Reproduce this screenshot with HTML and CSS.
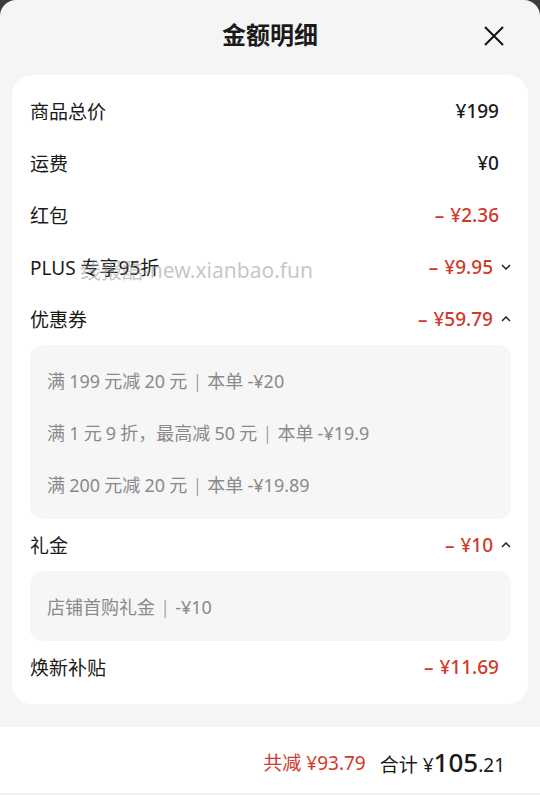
FILE: index.html
```html
<!DOCTYPE html>
<html lang="zh-CN">
  <head>
    <meta charset="utf-8">
    <link rel="stylesheet" href="styles.css">
    <title>金额明细</title>
  </head>
  <body>
    <div class="sheet">
      <div class="header">
        <span></span>
        <h1>金额明细</h1>
        <svg class="close" width="20" height="20" viewBox="0 0 20 20">
          <path d="M1 1 L19 19 M19 1 L1 19" stroke="#111" stroke-width="2" fill="none"/>
        </svg>
      </div>

      <div class="card">
        <div class="row">
          <span class="label">商品总价</span>
          <span class="value">¥199</span>
        </div>
        <div class="row">
          <span class="label">运费</span>
          <span class="value">¥0</span>
        </div>
        <div class="row">
          <span class="label">红包</span>
          <span class="value red"><i>–</i>¥2.36</span>
        </div>
        <div class="row folded">
          <span class="label">PLUS 专享95折</span>
          <span class="value red"><i>–</i>¥9.95</span>
          <svg class="chev" width="10" height="6" viewBox="0 0 10 6">
            <path d="M1 1 L5 5 L9 1" stroke="#222" stroke-width="1.5" fill="none"/>
          </svg>
          <span class="watermark">线报酷-new.xianbao.fun</span>
        </div>
        <div class="row folded">
          <span class="label">优惠券</span>
          <span class="value red"><i>–</i>¥59.79</span>
          <svg class="chev" width="10" height="6" viewBox="0 0 10 6">
            <path d="M1 5 L5 1 L9 5" stroke="#222" stroke-width="1.5" fill="none"/>
          </svg>
        </div>
        <div class="detail">
          <p>满 199 元减 20 元 <i>|</i> 本单 -¥20</p>
          <p>满 1 元 9 折，最高减 50 元 <i>|</i> 本单 -¥19.9</p>
          <p>满 200 元减 20 元 <i>|</i> 本单 -¥19.89</p>
        </div>
        <div class="row folded">
          <span class="label">礼金</span>
          <span class="value red"><i>–</i>¥10</span>
          <svg class="chev" width="10" height="6" viewBox="0 0 10 6">
            <path d="M1 5 L5 1 L9 5" stroke="#222" stroke-width="1.5" fill="none"/>
          </svg>
        </div>
        <div class="detail">
          <p>店铺首购礼金 <i>|</i> -¥10</p>
        </div>
        <div class="row">
          <span class="label">焕新补贴</span>
          <span class="value red"><i>–</i>¥11.69</span>
        </div>
      </div>

      <div class="footer">
        <span class="saved">共减 ¥93.79</span>
        <span class="total">合计 ¥<b>105</b>.21</span>
      </div>
    </div>
  </body>
</html>
```

FILE: styles.css
```css
body{
  margin: 0;
  background-color: #3c3c3c;
  font-family: 'Noto Sans', 'Noto Sans CJK SC', sans-serif;
  color: #1a1a1a;
}
.sheet{
  background-color: #f5f5f5;
  border-radius: 16px 16px 0 0;
  height: 795px;
  display: flex;
  flex-direction: column;
  overflow: hidden;
}
.header{
  height: 75px;
  display: grid;
  grid-template-columns: 1fr auto 1fr;
  align-items: center;
  padding: 0 36px;
}
.header h1{
  margin: 0;
  font-size: 24px;
  font-weight: 700;
  line-height: 1;
  padding-bottom: 5px;
}
.close{
  justify-self: end;
  margin-bottom: 3px;
}
.card{
  background-color: #ffffff;
  margin: 0 12px;
  border-radius: 20px;
  padding: 10px 17px 11px 18px;
}
.row{
  position: relative;
  height: 52px;
  display: flex;
  align-items: center;
  padding-right: 12px;
}
.row.folded{
  padding-right: 0;
}
.label{
  flex: 1;
  font-size: 19px;
}
.value{
  font-size: 19px;
  font-weight: 500;
}
.value i{
  font-style: normal;
  margin-right: 6px;
}
.red{
  color: #cf3a2a;
}
.chev{
  margin-left: 8px;
}
.watermark{
  position: absolute;
  left: 50px;
  top: 13px;
  font-size: 21px;
  color: rgba(150, 150, 150, 0.55);
  pointer-events: none;
}
.detail{
  background-color: #f6f6f6;
  border-radius: 12px;
  padding: 10px 0 8px 17px;
}
.detail p{
  margin: 0;
  height: 52px;
  line-height: 52px;
  font-size: 18px;
  color: #8a8a8a;
  word-spacing: -0.5px;
}
.detail p i{
  font-style: normal;
  font-weight: 300;
  margin: 0 1px;
}
.footer{
  margin-top: 23px;
  background-color: #ffffff;
  height: 62px;
  border-bottom: 1px solid #ececec;
  display: flex;
  justify-content: flex-end;
  align-items: center;
  gap: 14px;
  padding: 4px 35px 0 0;
}
.saved{
  color: #cf3a2a;
  font-size: 19px;
}
.total{
  font-size: 19px;
}
.total b{
  font-size: 26px;
  font-weight: 500;
}
```
